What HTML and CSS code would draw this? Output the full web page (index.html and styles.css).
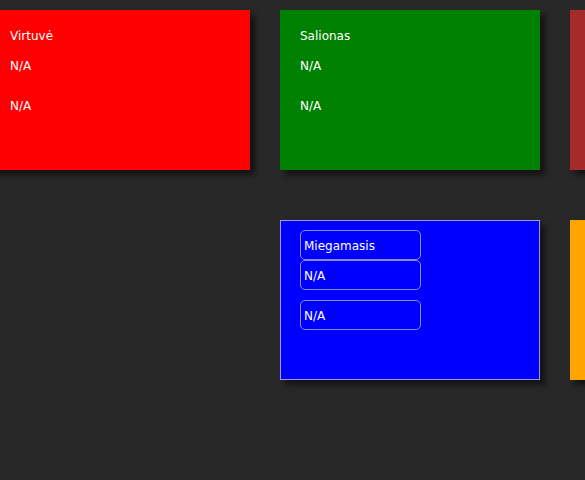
FILE: index.html
```html
<!DOCTYPE html>
<html>
<head>
<meta charset="utf-8">
<link rel="stylesheet" href="styles.css">
</head>
<body>
<div class="viewport">
<div class="grid">
  <div class="card red">
    <div class="item">Virtuvė</div>
    <div class="item">N/A</div>
    <div class="item second">N/A</div>
  </div>
  <div class="card green">
    <div class="item">Salionas</div>
    <div class="item">N/A</div>
    <div class="item second">N/A</div>
  </div>
  <div class="card brown"></div>
  <div class="empty"></div>
  <div class="card blue">
    <div class="item">Miegamasis</div>
    <div class="item">N/A</div>
    <div class="item second">N/A</div>
  </div>
  <div class="card orange"></div>
</div>
</div>
</body>
</html>
```
FILE: styles.css
```css
html, body {
  margin: 0;
  padding: 0;
  background: #282828;
}
body {
  font-family: "DejaVu Sans", sans-serif;
  font-size: 12px;
  color: #ffffff;
}
.viewport {
  width: 585px;
  height: 480px;
  overflow: hidden;
}
.grid {
  display: grid;
  grid-template-columns: 260px 260px 260px;
  grid-template-rows: 160px 160px;
  column-gap: 30px;
  row-gap: 50px;
  margin: 10px 0 0 -10px;
}
.card {
  box-sizing: border-box;
  padding: 10px 20px;
  box-shadow: 5px 5px 6px rgba(0, 0, 0, 0.55);
  display: flex;
  flex-direction: column;
}
.item {
  height: 30px;
  line-height: 32px;
  width: 121px;
  box-sizing: border-box;
}
.item.second {
  margin-top: 10px;
}
.red { background: #ff0000; }
.green { background: #008000; }
.brown { background: #a52a2a; }
.orange { background: #ffa500; }
.blue {
  background: #0000ff;
  border: 1px solid #9a9ad8;
  padding: 9px 19px;
}
.blue .item {
  border: 1px solid #8a8ae8;
  border-radius: 5px;
  line-height: 30px;
  padding-left: 3px;
}
```
